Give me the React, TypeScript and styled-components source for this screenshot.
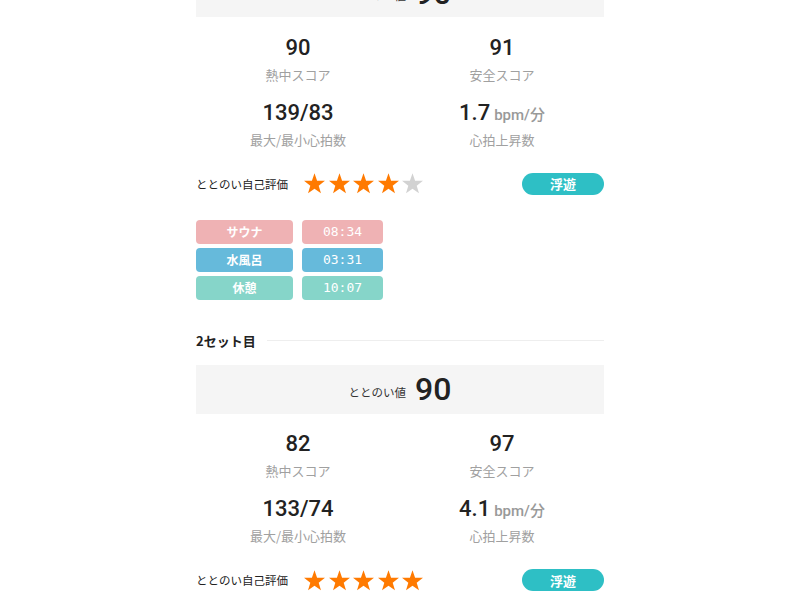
import React from "react";
import styled, { createGlobalStyle } from "styled-components";

const GlobalStyle = createGlobalStyle`
  html, body { margin: 0; padding: 0; background: #ffffff; }
  body { font-family: "Noto Sans CJK JP", "Noto Sans", sans-serif; color: #222; }
`;

const Page = styled.div`
  width: 408px;
  margin: -32px auto 0;
  display: flex;
  flex-direction: column;
`;

const SetBlock = styled.section`
  display: flex;
  flex-direction: column;
`;

const SetHeader = styled.div`
  display: flex;
  align-items: center;
  gap: 11px;
  height: 20px;
  margin: 31px 0 14px;
  font-size: 13px;
  font-weight: 700;
  color: #222;
  &::after {
    content: "";
    flex: 1;
    height: 1px;
    background: #eeeeee;
  }
`;

const ScoreBox = styled.div`
  height: 49px;
  background: #f5f5f5;
  display: flex;
  align-items: center;
  justify-content: center;
  gap: 9px;
`;

const ScoreLabel = styled.span`
  font-size: 11.5px;
  color: #333;
  padding-top: 5px;
`;

const ScoreValue = styled.span`
  font-family: Roboto, "Liberation Sans", sans-serif;
  font-size: 32px;
  font-weight: 500;
  color: #222;
  line-height: 1;
`;

const StatsGrid = styled.div`
  display: grid;
  grid-template-columns: 1fr 1fr;
  row-gap: 14px;
  padding-top: 16.5px;
  margin-bottom: 22px;
`;

const Stat = styled.div`
  display: flex;
  flex-direction: column;
  align-items: center;
  gap: 3px;
`;

const StatValue = styled.div`
  height: 28px;
  display: flex;
  align-items: baseline;
  gap: 4px;
  font-family: Roboto, "Liberation Sans", sans-serif;
  font-size: 22px;
  font-weight: 500;
  line-height: 28px;
  color: #222;
`;

const Unit = styled.span`
  font-family: Roboto, "Noto Sans CJK JP", sans-serif;
  font-size: 15px;
  font-weight: 500;
  color: #999;
`;

const StatLabel = styled.div`
  height: 20px;
  line-height: 20px;
  font-size: 13px;
  color: #a0a0a0;
`;

const RatingRow = styled.div`
  height: 24px;
  display: flex;
  align-items: center;
`;

const RatingLabel = styled.span`
  font-size: 11.5px;
  color: #222;
  width: 107px;
`;

const Stars = styled.div`
  display: flex;
  gap: 1.5px;
  flex: 1;
`;

const StatusPill = styled.div`
  width: 82px;
  height: 22px;
  border-radius: 11px;
  background: #2ebfc5;
  color: #fff;
  font-size: 13px;
  font-weight: 700;
  display: flex;
  align-items: center;
  justify-content: center;
`;

const Timeline = styled.div`
  display: grid;
  grid-template-columns: 97px 81px;
  column-gap: 9px;
  row-gap: 4px;
  margin-top: 24px;
`;

const Tag = styled.div<{ $color: string; $mono?: boolean }>`
  height: 24px;
  border-radius: 4px;
  background: ${(p) => p.$color};
  color: #fff;
  display: flex;
  align-items: center;
  justify-content: center;
  font-family: ${(p) =>
    p.$mono ? '"DejaVu Sans Mono", "Liberation Mono", monospace' : '"Noto Sans CJK JP", sans-serif'};
  font-size: ${(p) => (p.$mono ? "13px" : "12px")};
  font-weight: ${(p) => (p.$mono ? 400 : 700)};
`;

const Star = ({ filled }: { filled: boolean }) => (
  <svg width="23" height="23" viewBox="0 0 24 24">
    <polygon
      fill={filled ? "#ff7a00" : "#d2d2d2"}
      points="12,1.3 14.7,9.08 22.94,9.25 16.38,14.22 18.76,22.1 12,17.4 5.24,22.1 7.62,14.22 1.06,9.25 9.3,9.08"
    />
  </svg>
);

type SetData = {
  title?: string;
  score: number;
  heat: number;
  safe: number;
  hr: string;
  rise: string;
  stars: number;
  status: string;
  times?: { sauna: string; water: string; rest: string };
};

const sets: SetData[] = [
  {
    score: 90,
    heat: 90,
    safe: 91,
    hr: "139/83",
    rise: "1.7",
    stars: 4,
    status: "浮遊",
    times: { sauna: "08:34", water: "03:31", rest: "10:07" },
  },
  {
    title: "2セット目",
    score: 90,
    heat: 82,
    safe: 97,
    hr: "133/74",
    rise: "4.1",
    stars: 5,
    status: "浮遊",
  },
];

const SetView = ({ data }: { data: SetData }) => (
  <SetBlock>
    {data.title && <SetHeader>{data.title}</SetHeader>}
    <ScoreBox>
      <ScoreLabel>ととのい値</ScoreLabel>
      <ScoreValue>{data.score}</ScoreValue>
    </ScoreBox>
    <StatsGrid>
      <Stat>
        <StatValue>{data.heat}</StatValue>
        <StatLabel>熱中スコア</StatLabel>
      </Stat>
      <Stat>
        <StatValue>{data.safe}</StatValue>
        <StatLabel>安全スコア</StatLabel>
      </Stat>
      <Stat>
        <StatValue>{data.hr}</StatValue>
        <StatLabel>最大/最小心拍数</StatLabel>
      </Stat>
      <Stat>
        <StatValue>
          {data.rise}
          <Unit>bpm/分</Unit>
        </StatValue>
        <StatLabel>心拍上昇数</StatLabel>
      </Stat>
    </StatsGrid>
    <RatingRow>
      <RatingLabel>ととのい自己評価</RatingLabel>
      <Stars>
        {[0, 1, 2, 3, 4].map((i) => (
          <Star key={i} filled={i < data.stars} />
        ))}
      </Stars>
      <StatusPill>{data.status}</StatusPill>
    </RatingRow>
    {data.times && (
      <Timeline>
        <Tag $color="#efb2b4">サウナ</Tag>
        <Tag $color="#efb2b4" $mono>{data.times.sauna}</Tag>
        <Tag $color="#66badb">水風呂</Tag>
        <Tag $color="#66badb" $mono>{data.times.water}</Tag>
        <Tag $color="#86d5c9">休憩</Tag>
        <Tag $color="#86d5c9" $mono>{data.times.rest}</Tag>
      </Timeline>
    )}
  </SetBlock>
);

export default function App() {
  return (
    <>
      <GlobalStyle />
      <Page>
        {sets.map((s, i) => (
          <SetView key={i} data={s} />
        ))}
      </Page>
    </>
  );
}
